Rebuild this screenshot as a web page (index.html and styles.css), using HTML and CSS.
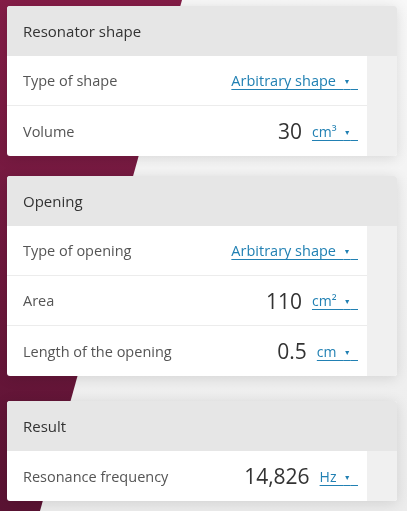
FILE: index.html
```html
<!DOCTYPE HTML>
<html lang="en">
<head>
	<title>Helmholtz resonator</title>
	<link rel="stylesheet" href="styles.css">
</head>
<body>
	<div class="panel">
		<div class="panel-head">Resonator shape</div>
		<div class="row">
			<div class="cell">
				<span class="label">Type of shape</span>
				<a class="pick" href="#">Arbitrary shape&nbsp;&nbsp;<span class="caret">&#9660;</span>&nbsp;&nbsp;</a>
			</div>
			<div class="side"></div>
		</div>
		<div class="row">
			<div class="cell">
				<span class="label">Volume</span>
				<span class="num">30</span>
				<a class="pick" href="#">cm³&nbsp;&nbsp;<span class="caret">&#9660;</span>&nbsp;&nbsp;</a>
			</div>
			<div class="side"></div>
		</div>
	</div>

	<div class="panel">
		<div class="panel-head">Opening</div>
		<div class="row">
			<div class="cell">
				<span class="label">Type of opening</span>
				<a class="pick" href="#">Arbitrary shape&nbsp;&nbsp;<span class="caret">&#9660;</span>&nbsp;&nbsp;</a>
			</div>
			<div class="side"></div>
		</div>
		<div class="row">
			<div class="cell">
				<span class="label">Area</span>
				<span class="num">110</span>
				<a class="pick" href="#">cm²&nbsp;&nbsp;<span class="caret">&#9660;</span>&nbsp;&nbsp;</a>
			</div>
			<div class="side"></div>
		</div>
		<div class="row">
			<div class="cell">
				<span class="label">Length of the opening</span>
				<span class="num">0.5</span>
				<a class="pick" href="#">cm&nbsp;&nbsp;<span class="caret">&#9660;</span>&nbsp;&nbsp;</a>
			</div>
			<div class="side"></div>
		</div>
	</div>

	<div class="panel panel-result">
		<div class="panel-head">Result</div>
		<div class="row">
			<div class="cell">
				<span class="label">Resonance frequency</span>
				<span class="num">14,826</span>
				<a class="pick" href="#">Hz&nbsp;&nbsp;<span class="caret">&#9660;</span>&nbsp;&nbsp;</a>
			</div>
			<div class="side"></div>
		</div>
	</div>
</body>
</html>
```

FILE: styles.css
```css
html {
	height:100%;
	}
body {
	margin:0;
	padding:6px 10px 0 7px;
	min-height:100%;
	box-sizing:border-box;
	position:relative;
	background:linear-gradient(#f8f8f8, #ececec);
	font-family:"Open Sans", "Noto Sans", sans-serif;
	font-size:14.5px;
	color:#555;
	}
/* Diagonal band behind the panels */
body:before {
	position:fixed;
	top:0;
	left:0;
	width:100%;
	height:100%;
	background:linear-gradient(#841d47, #5a1333);
	-webkit-clip-path:polygon(0 0, 182px 0, 40px 511px, 0 511px);
	clip-path:polygon(0 0, 182px 0, 40px 511px, 0 511px);
	content:'';
	}

/* Panel */
.panel {
	position:relative;
	margin-bottom:20px;
	background:#fff;
	border-radius:3px;
	overflow:hidden;
	box-shadow:0 2px 14px rgba(0,0,0,.12);
	}
.panel-result {
	margin-top:25px;
	}
.panel-head {
	height:50px;
	line-height:50px;
	padding-left:16px;
	background:#e6e6e6;
	color:#333;
	font-size:15px;
	}

/* Row */
.row {
	display:flex;
	height:50px;
	}
	.row .cell {
		flex:1;
		display:flex;
		align-items:center;
		padding:0 9px 0 16px;
		border-bottom:1px solid #ececec;
		}
	.row:last-child .cell {
		border-bottom:none;
		}
	.row .side {
		width:30px;
		background:#f0f0f0;
		}
.label {
	flex:1;
	}
.num {
	margin-right:10px;
	color:#333;
	font-size:21px;
	}
.pick {
	color:#2180b3;
	font-size:14.5px;
	text-decoration:underline;
	text-underline-offset:3px;
	white-space:nowrap;
	}
.num + .pick {
	font-size:14px;
	}
.caret {
	font-size:7px;
	vertical-align:2px;
	}
```
